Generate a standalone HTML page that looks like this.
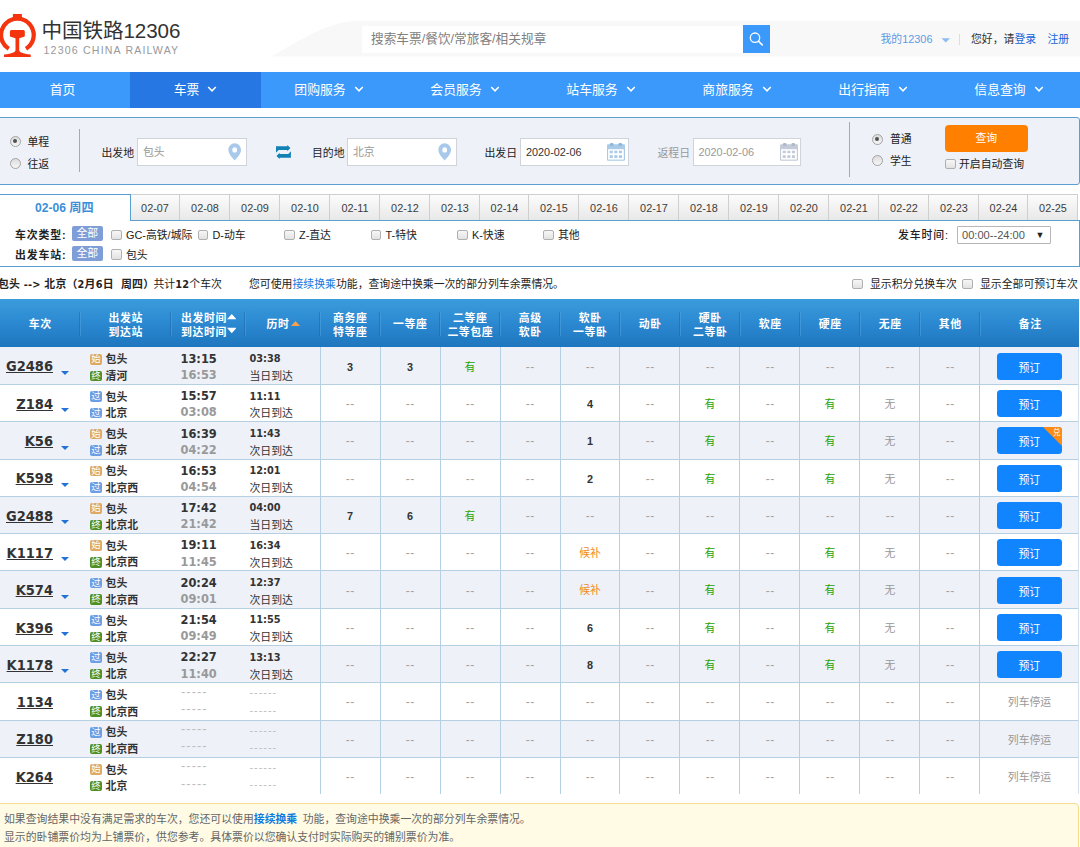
<!DOCTYPE html>
<html lang="zh-CN">
<head>
<meta charset="utf-8">
<title>中国铁路12306</title>
<style>
*{box-sizing:border-box;margin:0;padding:0}
html,body{width:1080px;height:847px;overflow:hidden;background:#fff}
body{font-family:"Liberation Sans","Noto Sans CJK SC",sans-serif;font-size:10.87px;color:#222;position:relative;line-height:1.2}
a{text-decoration:none;color:#1565d8}
.abs{position:absolute}
.t{position:absolute;white-space:nowrap;line-height:14px;height:14px}
.b{font-weight:bold;letter-spacing:0.9px}
/* header */
#hd{position:absolute;left:0;top:0;width:1080px;height:72px;background:#fff;overflow:hidden}
#hdbg{position:absolute;left:0;top:0}
#title{position:absolute;left:41.5px;top:18.6px;font-size:20.6px;line-height:24px;color:#333;white-space:nowrap;letter-spacing:-0.1px}
#sub{position:absolute;left:43.5px;top:43.5px;font-size:10.6px;line-height:13px;color:#999;white-space:nowrap;letter-spacing:1.18px}
#sbox{position:absolute;left:362px;top:26px;width:381px;height:26.5px;background:#fff;border:0;font-size:12.68px;color:#808080;line-height:26.5px;padding-left:9px;white-space:nowrap}
#sbtn{position:absolute;left:743px;top:25px;width:27px;height:27.5px;background:#3b99fc}
/* nav */
#nav{position:absolute;left:0;top:72px;width:1080px;height:36px;background:#3b99fc}
#nav .it{position:absolute;top:0;height:36px;line-height:36px;color:#fff;font-size:12.85px;text-align:center;white-space:nowrap}
#nav .it.on{background:#2676e3}
#nav svg{display:inline-block;vertical-align:middle;margin-left:8px;position:relative;top:-1px}
/* panel */
#panel{position:absolute;left:-4px;top:117px;width:1083.5px;height:67.5px;background:#eef1f8;border:1px solid #5a9fd0;border-radius:3px}
.inp{position:absolute;background:#fff;border:1px solid #cfd3da;height:27.5px;line-height:27.5px;font-size:10.87px;color:#999;padding-left:5px;white-space:nowrap}
.radio{position:absolute;width:11px;height:11px;border-radius:50%;border:1px solid #a3a3a3;background:linear-gradient(#dcdcdc,#f6f6f6)}
.radio.on:after{content:"";position:absolute;left:2.2px;top:2.2px;width:4.6px;height:4.6px;border-radius:50%;background:#505050}
.cb{position:absolute;width:10.5px;height:10.5px;border:1px solid #b0b0b0;border-radius:2px;background:linear-gradient(#f7f7f7,#e2e2e2)}

#tabs{position:absolute;left:0;top:193.5px;width:1080px;height:27px}
#tabs .d{position:absolute;top:0;height:26.5px;border:1px solid #cfcfcf;border-left:0;border-bottom:0;background:linear-gradient(#fcfcfc,#e8e8e8);text-align:center;line-height:27px;font-size:10.87px;color:#3c3c3c;padding-left:1px}
#tabs .cur{position:absolute;left:-2px;top:0;width:132.5px;height:27px;background:#fff;border:1px solid #5a9fd0;border-bottom:0;color:#3b8fd9;font-weight:bold;font-size:12.1px;line-height:26px;text-align:center;z-index:2;padding-left:0px}
#filter{position:absolute;left:-4px;top:220px;width:1083.5px;height:46.5px;border:1px solid #5a9fd0;background:#fff}
.all{position:absolute;width:30.5px;height:15px;background:#7f9dd6;color:#fff;border-radius:2px;text-align:center;line-height:15px;font-size:10.87px}
#sel{position:absolute;left:957px;top:226.3px;width:93.5px;height:18px;border:1px solid #b6b6b6;background:#fff;font-size:11.100px;line-height:16.5px;padding-left:4px;color:#555;border-radius:1px}
#th{position:absolute;left:0;top:299px;width:1078.7px;height:47.7px;background:linear-gradient(#3b9cdc,#2b89d1 50%,#1e76be);}
#th .h{position:absolute;color:#fff;font-weight:bold;font-size:10.87px;line-height:13.7px;text-align:center;white-space:nowrap;letter-spacing:0.6px;padding-left:0.6px}
#th .dv{position:absolute;top:12.5px;width:2px;height:24px;border-left:1px solid #2069a8;border-right:1px solid #4ea3dd;opacity:.55}
.row{position:absolute;left:0;width:1078.7px;height:37.3px;box-shadow:inset 0 1px 0 #b5cfe3;overflow:hidden}
.row.odd{background:#eef1f8}
.row .vl{position:absolute;top:-1px;width:1px;height:40px;background:#b5cfe3}
.row .c{position:absolute;top:13px;width:60px;height:14px;line-height:14px;text-align:center;font-size:10.87px;color:#999}
.row .c.d{font-size:12px;letter-spacing:0.7px;padding-left:0.7px;color:#a3a3a3;top:13.2px}
.row .c.n{color:#333;font-weight:bold}
.row .c.y{color:#26a306}
.row .c.hb{color:#f08a1c}
.num{position:absolute;right:1027px;top:10.87px;text-decoration-thickness:1.1px;text-underline-offset:1.1px;font-family:"DejaVu Sans Condensed","DejaVu Sans","Liberation Sans",sans-serif;font-weight:bold;font-size:14.5px;line-height:18px;color:#333;text-decoration:underline;white-space:nowrap}
.tri{position:absolute;left:60.6px;top:24.4px;width:0;height:0;border-left:4.7px solid transparent;border-right:4.700px solid transparent;border-top:4.400px solid #2272d8}
.ic{position:absolute;left:90.2px;width:11.4px;height:10.6px;border-radius:2px;color:#fff;font-size:9.4px;line-height:10.6px;text-align:center;overflow:hidden}
.ic.s{background:#dcaa64}.ic.z{background:#4f8f24}.ic.g{background:#6c9ee4}
.st{position:absolute;left:105.6px;font-weight:bold;font-size:10.87px;line-height:14px;color:#333;white-space:nowrap}
.tm{position:absolute;left:180.5px;font-family:"DejaVu Sans Condensed","DejaVu Sans","Liberation Sans",sans-serif;font-weight:bold;font-size:12.68px;line-height:16px;color:#333;white-space:nowrap}
.tm.a{color:#999}
.du{position:absolute;left:249.5px;font-family:"DejaVu Sans Condensed","DejaVu Sans","Liberation Sans",sans-serif;font-weight:bold;font-size:10.87px;line-height:14px;color:#333;white-space:nowrap}
.dd{position:absolute;left:249.5px;font-size:10.87px;line-height:14px;color:#333;white-space:nowrap}
.dash{position:absolute;color:#bdbdbd;font-size:12.68px;line-height:14px;letter-spacing:1.1px;white-space:nowrap}
.dash.d2{font-size:10.87px;letter-spacing:1px}
.bk{position:absolute;left:996.5px;top:6.200px;width:65.500px;height:27px;background:#1184ff;border-radius:3.500px;color:#fff;font-size:10.87px;line-height:31.600px;text-align:center;overflow:hidden}
.stop{position:absolute;left:980px;width:99px;top:13.200px;text-align:center;font-size:10.87px;line-height:14px;color:#999}
.tb{font-family:"DejaVu Sans Condensed","Liberation Sans","Noto Sans CJK SC",sans-serif;letter-spacing:0.22px}
.lk{color:#0f7ae0;font-weight:bold}
#note{position:absolute;left:-4px;top:803px;width:1082.500px;height:60px;background:#fffbe5;border:1px solid #f3dd8e;border-radius:4px}
</style>
</head>
<body>
<div id="hd">
<svg id="hdbg" width="1080" height="72" viewBox="0 0 1080 72"><path d="M271 56.5 C285 50 320 24 352 21.3 L1080 21.3 L1080 56.5 Z" fill="#f8f8f8"/></svg>
<svg class="abs" style="left:-2px;top:12px" width="42" height="48" viewBox="-2 12 42 48">
<g fill="#f4330f">
<path d="M12.9 13.9 H21.900 V17.100 A18.400 18.400 0 0 1 27.150 50.600 L24.930 47.040 A14.200 14.200 0 1 0 9.870 47.040 L7.650 50.600 A18.400 18.400 0 0 1 12.900 17.100 Z"/>
<path d="M11.4 30.1 h11.9 a1.5 1.5 0 0 1 1.5 1.5 v4 a1.5 1.5 0 0 1 -1.5 1.5 l-4.1 1.2 v12 c0.5 2 3 3.3 11.5 4.3 v2.3 h-26.7 v-2.3 c8.500 -1 11 -2.300 11.500 -4.300 v-12 l-4.100 -1.200 a1.500 1.500 0 0 1 -1.500 -1.500 v-4 a1.500 1.500 0 0 1 1.500 -1.500 z"/>
</g></svg>
<div id="title">中国铁路12306</div>
<div id="sub">12306 CHINA RAILWAY</div>
<div id="sbox">搜索车票/餐饮/常旅客/相关规章</div>
<div id="sbtn"><svg width="27" height="27.5" viewBox="0 0 27 27.5"><circle cx="12" cy="12.700" r="4.700" fill="none" stroke="#fff" stroke-width="1.300"/><path d="M15.500 16.200 L19.200 19.900" stroke="#fff" stroke-width="1.600" stroke-linecap="round"/></svg></div>
<div class="t" style="left:880.5px;top:32px;color:#5b9be6">我的12306</div>
<svg class="abs" style="left:941px;top:37.5px" width="10" height="5" viewBox="0 0 10 5"><path d="M0.5 0.3 L9 0.3 L4.75 4.5 Z" fill="#8cbcf0"/></svg>
<div class="abs" style="left:959px;top:34px;width:1px;height:11px;background:#cfe0f3"></div>
<div class="t" style="left:971px;top:32px;color:#333">您好，请<a href="#">登录</a></div>
<div class="t" style="left:1047.5px;top:32px"><a href="#">注册</a></div>
</div>
<div id="nav">
<div class="it" style="left:-5px;width:135px">首页</div>
<div class="it on" style="left:130px;width:131px">车票<svg width="10" height="6.5" viewBox="0 0 9 6"><path d="M1 1 L4.5 4.5 L8 1" fill="none" stroke="#fff" stroke-width="1.4"/></svg></div>
<div class="it" style="left:261px;width:136px">团购服务<svg width="10" height="6.5" viewBox="0 0 9 6"><path d="M1 1 L4.5 4.5 L8 1" fill="none" stroke="#fff" stroke-width="1.4"/></svg></div>
<div class="it" style="left:397px;width:136px">会员服务<svg width="10" height="6.5" viewBox="0 0 9 6"><path d="M1 1 L4.5 4.5 L8 1" fill="none" stroke="#fff" stroke-width="1.4"/></svg></div>
<div class="it" style="left:533px;width:136px">站车服务<svg width="10" height="6.5" viewBox="0 0 9 6"><path d="M1 1 L4.5 4.5 L8 1" fill="none" stroke="#fff" stroke-width="1.4"/></svg></div>
<div class="it" style="left:669px;width:136px">商旅服务<svg width="10" height="6.5" viewBox="0 0 9 6"><path d="M1 1 L4.5 4.5 L8 1" fill="none" stroke="#fff" stroke-width="1.4"/></svg></div>
<div class="it" style="left:805px;width:136px">出行指南<svg width="10" height="6.5" viewBox="0 0 9 6"><path d="M1 1 L4.5 4.5 L8 1" fill="none" stroke="#fff" stroke-width="1.4"/></svg></div>
<div class="it" style="left:941px;width:136px">信息查询<svg width="10" height="6.5" viewBox="0 0 9 6"><path d="M1 1 L4.5 4.5 L8 1" fill="none" stroke="#fff" stroke-width="1.4"/></svg></div>
</div>
<div id="panel"></div>
<div class="radio on" style="left:9.5px;top:135.5px"></div><div class="t" style="left:27.5px;top:134.7px">单程</div>
<div class="radio" style="left:9.5px;top:157.5px"></div><div class="t" style="left:27.5px;top:156.7px">往返</div>
<div class="abs" style="left:79px;top:129px;width:1px;height:43px;background:#7db5de"></div>
<div class="t" style="left:101.5px;top:146.2px">出发地</div><div class="inp" style="left:137px;top:138px;width:109.5px">包头<svg class="abs" style="right:4px;top:3.9px" width="13.4" height="17.8" viewBox="0 0 14 17" preserveAspectRatio="none"><path d="M7 0.3 C3.300 0.300 0.400 3.100 0.400 6.700 C0.400 10.800 5 14.500 7 16.700 C9 14.500 13.600 10.800 13.600 6.700 C13.600 3.100 10.700 0.300 7 0.300 Z M7 4.100 A2.500 2.500 0 1 1 7 9.100 A2.500 2.500 0 1 1 7 4.100 Z" fill="#a9c9ea" fill-rule="evenodd"/></svg></div>
<svg class="abs" style="left:276px;top:145px" width="16" height="15" viewBox="0 0 16 15"><g fill="#1281b3"><path d="M0 1.300 L11.300 1.300 L11.300 0 L14.400 3.100 L11.300 6.200 L11.300 4.900 L2.600 4.900 L0 7.800 Z"/><path d="M14.900 12.700 L3.600 12.700 L3.600 14 L0.500 10.900 L3.600 7.800 L3.600 9.100 L12.300 9.100 L14.900 6.200 Z"/></g></svg>
<div class="t" style="left:312px;top:146.2px">目的地</div><div class="inp" style="left:347px;top:138px;width:109.5px">北京<svg class="abs" style="right:4px;top:3.9px" width="13.4" height="17.8" viewBox="0 0 14 17" preserveAspectRatio="none"><path d="M7 0.3 C3.300 0.300 0.400 3.100 0.400 6.700 C0.400 10.800 5 14.500 7 16.700 C9 14.500 13.600 10.800 13.600 6.700 C13.600 3.100 10.700 0.300 7 0.300 Z M7 4.100 A2.500 2.500 0 1 1 7 9.100 A2.500 2.500 0 1 1 7 4.100 Z" fill="#a9c9ea" fill-rule="evenodd"/></svg></div>
<div class="t" style="left:484.5px;top:146.2px">出发日</div><div class="inp" style="left:520px;top:138px;width:108.5px;color:#333">2020-02-06<svg class="abs" style="right:2.5px;top:3.900px" width="18" height="17.800" viewBox="0 0 18 17.800"><rect x="0" y="1.200" width="18" height="16.600" rx="1.200" fill="#a9cbe8"/><rect x="2.800" y="0" width="3.800" height="3" rx="1.500" fill="#8db7dc"/><rect x="11.400" y="0" width="3.800" height="3" rx="1.500" fill="#8db7dc"/><rect x="1.100" y="6.200" width="15.700" height="10.400" fill="#fff"/><g fill="#a9cbe8"><rect x="2.7" y="7.7" width="3.100" height="2.5"/><rect x="7.3" y="7.7" width="3.100" height="2.5"/><rect x="11.9" y="7.7" width="3.100" height="2.5"/><rect x="2.7" y="12.2" width="3.100" height="2.8"/><rect x="7.3" y="12.2" width="3.100" height="2.8"/><rect x="11.9" y="12.2" width="3.100" height="2.8"/></g></svg></div>
<div class="t" style="left:657.5px;top:146.2px;color:#999">返程日</div><div class="inp" style="left:692.5px;top:138px;width:108.5px;color:#999">2020-02-06<svg class="abs" style="right:2.5px;top:3.900px" width="18" height="17.800" viewBox="0 0 18 17.800"><rect x="0" y="1.200" width="18" height="16.600" rx="1.200" fill="#c3cbd8"/><rect x="2.800" y="0" width="3.800" height="3" rx="1.500" fill="#b0b9c8"/><rect x="11.400" y="0" width="3.800" height="3" rx="1.500" fill="#b0b9c8"/><rect x="1.100" y="6.200" width="15.700" height="10.400" fill="#fff"/><g fill="#c3cbd8"><rect x="2.7" y="7.7" width="3.100" height="2.5"/><rect x="7.3" y="7.7" width="3.100" height="2.5"/><rect x="11.9" y="7.7" width="3.100" height="2.5"/><rect x="2.7" y="12.2" width="3.100" height="2.8"/><rect x="7.3" y="12.2" width="3.100" height="2.8"/><rect x="11.9" y="12.2" width="3.100" height="2.8"/></g></svg></div>
<div class="abs" style="left:849px;top:122px;width:1px;height:55px;background:#7db5de"></div>
<div class="radio on" style="left:871.5px;top:133.5px"></div><div class="t" style="left:890px;top:132px">普通</div>
<div class="radio" style="left:871.5px;top:154.500px"></div><div class="t" style="left:890px;top:153.500px">学生</div>
<div class="abs" style="left:944.5px;top:124.500px;width:83.500px;height:27.500px;background:#ff8000;border-radius:4px;color:#fff;font-size:10.87px;line-height:27.500px;text-align:center">查询</div>
<div class="cb" style="left:945px;top:158.500px"></div><div class="t" style="left:959px;top:157px">开启自动查询</div>
<div id="tabs">
<div class="cur">02-06 周四</div>
<div class="d" style="left:130px;width:50px">02-07</div>
<div class="d" style="left:180px;width:50px">02-08</div>
<div class="d" style="left:230px;width:50px">02-09</div>
<div class="d" style="left:280px;width:50px">02-10</div>
<div class="d" style="left:330px;width:50px">02-11</div>
<div class="d" style="left:380px;width:50px">02-12</div>
<div class="d" style="left:430px;width:50px">02-13</div>
<div class="d" style="left:480px;width:49px">02-14</div>
<div class="d" style="left:529px;width:50px">02-15</div>
<div class="d" style="left:579px;width:50px">02-16</div>
<div class="d" style="left:629px;width:50px">02-17</div>
<div class="d" style="left:679px;width:50px">02-18</div>
<div class="d" style="left:729px;width:50px">02-19</div>
<div class="d" style="left:779px;width:50px">02-20</div>
<div class="d" style="left:829px;width:50px">02-21</div>
<div class="d" style="left:879px;width:50px">02-22</div>
<div class="d" style="left:929px;width:50px">02-23</div>
<div class="d" style="left:979px;width:49px">02-24</div>
<div class="d" style="left:1028px;width:50px">02-25</div>
</div>
<div id="filter"></div>
<div class="t b" style="left:15px;top:228px">车次类型:</div><div class="all" style="left:72px;top:225.8px">全部</div>
<div class="cb" style="left:111px;top:229.5px"></div><div class="t" style="left:126px;top:228px">GC-高铁/城际</div>
<div class="cb" style="left:197.5px;top:229.5px"></div><div class="t" style="left:212.5px;top:228px">D-动车</div>
<div class="cb" style="left:284px;top:229.5px"></div><div class="t" style="left:299px;top:228px">Z-直达</div>
<div class="cb" style="left:370.5px;top:229.5px"></div><div class="t" style="left:385.5px;top:228px">T-特快</div>
<div class="cb" style="left:457px;top:229.5px"></div><div class="t" style="left:472px;top:228px">K-快速</div>
<div class="cb" style="left:543px;top:229.5px"></div><div class="t" style="left:558px;top:228px">其他</div>
<div class="t b" style="left:15px;top:247.5px">出发车站:</div><div class="all" style="left:72px;top:246px">全部</div>
<div class="cb" style="left:111px;top:249px"></div><div class="t" style="left:126px;top:247.500px">包头</div>
<div class="t" style="left:898px;top:228px;font-weight:500;letter-spacing:0.9px">发车时间:</div><div id="sel">00:00--24:00<span class="abs" style="right:5px;top:-0.5px;font-size:9px;color:#222">▼</span></div>
<div class="t" style="left:-2px;top:277px"><b class="tb">包头 --&gt; 北京（2月6日&nbsp; 周四）</b></div><div class="t" style="left:153.5px;top:277px">共计<b class="tb">12</b>个车次</div>
<div class="t" style="left:249px;top:277px">您可使用<a href="#" style="color:#0f7ae0">接续换乘</a>功能，查询途中换乘一次的部分列车余票情况。</div>
<div class="cb" style="left:852px;top:278.500px"></div><div class="t" style="left:870px;top:277px">显示积分兑换车次</div>
<div class="cb" style="left:962px;top:278.500px"></div><div class="t" style="left:980px;top:277px">显示全部可预订车次</div>
<div id="th">
<div class="dv" style="left:79px"></div><div class="dv" style="left:170px"></div><div class="dv" style="left:244px"></div><div class="dv" style="left:319px"></div><div class="dv" style="left:379px"></div><div class="dv" style="left:439px"></div><div class="dv" style="left:499px"></div><div class="dv" style="left:559px"></div><div class="dv" style="left:619px"></div><div class="dv" style="left:679px"></div><div class="dv" style="left:739px"></div><div class="dv" style="left:799px"></div><div class="dv" style="left:859px"></div><div class="dv" style="left:919px"></div><div class="dv" style="left:979px"></div>
<div class="h" style="left:0px;width:80px;top:19.35px">车次</div>
<div class="h" style="left:80px;width:91px;top:12.90px">出发站<br>到达站</div>
<div class="h" style="left:180.500px;top:12.900px;text-align:left">出发时间<br>到达时间</div>
<svg class="abs" style="left:226.500px;top:14.700px" width="9.5" height="21" viewBox="0 0 9.5 21"><path d="M0 5.300 L4.750 0 L9.500 5.300 Z M0 13.800 L9.500 13.800 L4.750 19.300 Z" fill="#fff"/></svg>
<div class="h" style="left:266px;top:19.350px;text-align:left">历时</div>
<svg class="abs" style="left:291px;top:22px" width="9" height="5" viewBox="0 0 9 5"><path d="M0 5 L4.500 0 L9 5 Z" fill="#f9a04a"/></svg>
<div class="h" style="left:320px;width:60px;top:12.90px">商务座<br>特等座</div>
<div class="h" style="left:380px;width:60px;top:19.35px">一等座</div>
<div class="h" style="left:440px;width:60px;top:12.90px">二等座<br>二等包座</div>
<div class="h" style="left:500px;width:60px;top:12.90px">高级<br>软卧</div>
<div class="h" style="left:560px;width:60px;top:12.90px">软卧<br>一等卧</div>
<div class="h" style="left:620px;width:60px;top:19.35px">动卧</div>
<div class="h" style="left:680px;width:60px;top:12.90px">硬卧<br>二等卧</div>
<div class="h" style="left:740px;width:60px;top:19.35px">软座</div>
<div class="h" style="left:800px;width:60px;top:19.35px">硬座</div>
<div class="h" style="left:860px;width:60px;top:19.35px">无座</div>
<div class="h" style="left:920px;width:60px;top:19.35px">其他</div>
<div class="h" style="left:980px;width:100px;top:19.35px">备注</div>
</div>
<div class="row odd" style="top:347px;height:37px;box-shadow:none"><div class="abs" style="left:0;top:-0.40px;width:1080px;height:38px">
<div class="vl" style="left:320px"></div><div class="vl" style="left:380px"></div><div class="vl" style="left:440px"></div><div class="vl" style="left:500px"></div><div class="vl" style="left:560px"></div><div class="vl" style="left:619px"></div><div class="vl" style="left:679px"></div><div class="vl" style="left:739px"></div><div class="vl" style="left:799px"></div><div class="vl" style="left:859px"></div><div class="vl" style="left:919px"></div><div class="vl" style="left:979px"></div><div class="vl" style="left:1077.7px;background:#d3e1ee"></div>
<a class="num" href="#">G2486</a><div class="tri"></div><div class="ic s" style="top:7.400px">始</div><div class="st" style="top:5.800px">包头</div><div class="ic z" style="top:23.900px">终</div><div class="st" style="top:22.300px">清河</div>
<div class="tm" style="top:4.400px">13:15</div><div class="tm a" style="top:20.500px">16:53</div><div class="du" style="top:5.600px">03:38</div><div class="dd" style="top:22.500px">当日到达</div>
<div class="c n" style="left:320px">3</div><div class="c n" style="left:380px">3</div><div class="c y" style="left:440px">有</div><div class="c d" style="left:500px">--</div><div class="c d" style="left:560px">--</div><div class="c d" style="left:620px">--</div><div class="c d" style="left:680px">--</div><div class="c d" style="left:740px">--</div><div class="c d" style="left:800px">--</div><div class="c d" style="left:860px">--</div><div class="c d" style="left:920px">--</div>
<a class="bk" href="#">预订</a>
</div></div>
<div class="row" style="top:384px;height:37px"><div class="abs" style="left:0;top:-0.10px;width:1080px;height:38px">
<div class="vl" style="left:320px"></div><div class="vl" style="left:380px"></div><div class="vl" style="left:440px"></div><div class="vl" style="left:500px"></div><div class="vl" style="left:560px"></div><div class="vl" style="left:619px"></div><div class="vl" style="left:679px"></div><div class="vl" style="left:739px"></div><div class="vl" style="left:799px"></div><div class="vl" style="left:859px"></div><div class="vl" style="left:919px"></div><div class="vl" style="left:979px"></div><div class="vl" style="left:1077.7px;background:#d3e1ee"></div>
<a class="num" href="#">Z184</a><div class="tri"></div><div class="ic g" style="top:7.400px">过</div><div class="st" style="top:5.800px">包头</div><div class="ic g" style="top:23.900px">过</div><div class="st" style="top:22.300px">北京</div>
<div class="tm" style="top:4.400px">15:57</div><div class="tm a" style="top:20.500px">03:08</div><div class="du" style="top:5.600px">11:11</div><div class="dd" style="top:22.500px">次日到达</div>
<div class="c d" style="left:320px">--</div><div class="c d" style="left:380px">--</div><div class="c d" style="left:440px">--</div><div class="c d" style="left:500px">--</div><div class="c n" style="left:560px">4</div><div class="c d" style="left:620px">--</div><div class="c y" style="left:680px">有</div><div class="c d" style="left:740px">--</div><div class="c y" style="left:800px">有</div><div class="c" style="left:860px">无</div><div class="c d" style="left:920px">--</div>
<a class="bk" href="#">预订</a>
</div></div>
<div class="row odd" style="top:421px;height:38px"><div class="abs" style="left:0;top:0.20px;width:1080px;height:38px">
<div class="vl" style="left:320px"></div><div class="vl" style="left:380px"></div><div class="vl" style="left:440px"></div><div class="vl" style="left:500px"></div><div class="vl" style="left:560px"></div><div class="vl" style="left:619px"></div><div class="vl" style="left:679px"></div><div class="vl" style="left:739px"></div><div class="vl" style="left:799px"></div><div class="vl" style="left:859px"></div><div class="vl" style="left:919px"></div><div class="vl" style="left:979px"></div><div class="vl" style="left:1077.7px;background:#d3e1ee"></div>
<a class="num" href="#">K56</a><div class="tri"></div><div class="ic s" style="top:7.400px">始</div><div class="st" style="top:5.800px">包头</div><div class="ic g" style="top:23.900px">过</div><div class="st" style="top:22.300px">北京</div>
<div class="tm" style="top:4.400px">16:39</div><div class="tm a" style="top:20.500px">04:22</div><div class="du" style="top:5.600px">11:43</div><div class="dd" style="top:22.500px">次日到达</div>
<div class="c d" style="left:320px">--</div><div class="c d" style="left:380px">--</div><div class="c d" style="left:440px">--</div><div class="c d" style="left:500px">--</div><div class="c n" style="left:560px">1</div><div class="c d" style="left:620px">--</div><div class="c y" style="left:680px">有</div><div class="c d" style="left:740px">--</div><div class="c y" style="left:800px">有</div><div class="c" style="left:860px">无</div><div class="c d" style="left:920px">--</div>
<a class="bk" href="#">预订<span class="abs" style="right:0;top:0;width:0;height:0;border-left:19.500px solid transparent;border-top:19.500px solid #ff8a14"></span><span class="abs" style="right:1.500px;top:0.500px;font-size:7.500px;line-height:9px;color:#fff">兑</span></a>
</div></div>
<div class="row" style="top:459px;height:37px"><div class="abs" style="left:0;top:-0.50px;width:1080px;height:38px">
<div class="vl" style="left:320px"></div><div class="vl" style="left:380px"></div><div class="vl" style="left:440px"></div><div class="vl" style="left:500px"></div><div class="vl" style="left:560px"></div><div class="vl" style="left:619px"></div><div class="vl" style="left:679px"></div><div class="vl" style="left:739px"></div><div class="vl" style="left:799px"></div><div class="vl" style="left:859px"></div><div class="vl" style="left:919px"></div><div class="vl" style="left:979px"></div><div class="vl" style="left:1077.7px;background:#d3e1ee"></div>
<a class="num" href="#">K598</a><div class="tri"></div><div class="ic s" style="top:7.400px">始</div><div class="st" style="top:5.800px">包头</div><div class="ic g" style="top:23.900px">过</div><div class="st" style="top:22.300px">北京西</div>
<div class="tm" style="top:4.400px">16:53</div><div class="tm a" style="top:20.500px">04:54</div><div class="du" style="top:5.600px">12:01</div><div class="dd" style="top:22.500px">次日到达</div>
<div class="c d" style="left:320px">--</div><div class="c d" style="left:380px">--</div><div class="c d" style="left:440px">--</div><div class="c d" style="left:500px">--</div><div class="c n" style="left:560px">2</div><div class="c d" style="left:620px">--</div><div class="c y" style="left:680px">有</div><div class="c d" style="left:740px">--</div><div class="c y" style="left:800px">有</div><div class="c" style="left:860px">无</div><div class="c d" style="left:920px">--</div>
<a class="bk" href="#">预订</a>
</div></div>
<div class="row odd" style="top:496px;height:37px"><div class="abs" style="left:0;top:-0.20px;width:1080px;height:38px">
<div class="vl" style="left:320px"></div><div class="vl" style="left:380px"></div><div class="vl" style="left:440px"></div><div class="vl" style="left:500px"></div><div class="vl" style="left:560px"></div><div class="vl" style="left:619px"></div><div class="vl" style="left:679px"></div><div class="vl" style="left:739px"></div><div class="vl" style="left:799px"></div><div class="vl" style="left:859px"></div><div class="vl" style="left:919px"></div><div class="vl" style="left:979px"></div><div class="vl" style="left:1077.7px;background:#d3e1ee"></div>
<a class="num" href="#">G2488</a><div class="tri"></div><div class="ic s" style="top:7.400px">始</div><div class="st" style="top:5.800px">包头</div><div class="ic z" style="top:23.900px">终</div><div class="st" style="top:22.300px">北京北</div>
<div class="tm" style="top:4.400px">17:42</div><div class="tm a" style="top:20.500px">21:42</div><div class="du" style="top:5.600px">04:00</div><div class="dd" style="top:22.500px">当日到达</div>
<div class="c n" style="left:320px">7</div><div class="c n" style="left:380px">6</div><div class="c y" style="left:440px">有</div><div class="c d" style="left:500px">--</div><div class="c d" style="left:560px">--</div><div class="c d" style="left:620px">--</div><div class="c d" style="left:680px">--</div><div class="c d" style="left:740px">--</div><div class="c d" style="left:800px">--</div><div class="c d" style="left:860px">--</div><div class="c d" style="left:920px">--</div>
<a class="bk" href="#">预订</a>
</div></div>
<div class="row" style="top:533px;height:37px"><div class="abs" style="left:0;top:0.10px;width:1080px;height:38px">
<div class="vl" style="left:320px"></div><div class="vl" style="left:380px"></div><div class="vl" style="left:440px"></div><div class="vl" style="left:500px"></div><div class="vl" style="left:560px"></div><div class="vl" style="left:619px"></div><div class="vl" style="left:679px"></div><div class="vl" style="left:739px"></div><div class="vl" style="left:799px"></div><div class="vl" style="left:859px"></div><div class="vl" style="left:919px"></div><div class="vl" style="left:979px"></div><div class="vl" style="left:1077.7px;background:#d3e1ee"></div>
<a class="num" href="#">K1117</a><div class="tri"></div><div class="ic s" style="top:7.400px">始</div><div class="st" style="top:5.800px">包头</div><div class="ic z" style="top:23.900px">终</div><div class="st" style="top:22.300px">北京西</div>
<div class="tm" style="top:4.400px">19:11</div><div class="tm a" style="top:20.500px">11:45</div><div class="du" style="top:5.600px">16:34</div><div class="dd" style="top:22.500px">次日到达</div>
<div class="c d" style="left:320px">--</div><div class="c d" style="left:380px">--</div><div class="c d" style="left:440px">--</div><div class="c d" style="left:500px">--</div><div class="c hb" style="left:560px">候补</div><div class="c d" style="left:620px">--</div><div class="c y" style="left:680px">有</div><div class="c d" style="left:740px">--</div><div class="c y" style="left:800px">有</div><div class="c" style="left:860px">无</div><div class="c d" style="left:920px">--</div>
<a class="bk" href="#">预订</a>
</div></div>
<div class="row odd" style="top:570px;height:38px"><div class="abs" style="left:0;top:0.40px;width:1080px;height:38px">
<div class="vl" style="left:320px"></div><div class="vl" style="left:380px"></div><div class="vl" style="left:440px"></div><div class="vl" style="left:500px"></div><div class="vl" style="left:560px"></div><div class="vl" style="left:619px"></div><div class="vl" style="left:679px"></div><div class="vl" style="left:739px"></div><div class="vl" style="left:799px"></div><div class="vl" style="left:859px"></div><div class="vl" style="left:919px"></div><div class="vl" style="left:979px"></div><div class="vl" style="left:1077.7px;background:#d3e1ee"></div>
<a class="num" href="#">K574</a><div class="tri"></div><div class="ic g" style="top:7.400px">过</div><div class="st" style="top:5.800px">包头</div><div class="ic z" style="top:23.900px">终</div><div class="st" style="top:22.300px">北京西</div>
<div class="tm" style="top:4.400px">20:24</div><div class="tm a" style="top:20.500px">09:01</div><div class="du" style="top:5.600px">12:37</div><div class="dd" style="top:22.500px">次日到达</div>
<div class="c d" style="left:320px">--</div><div class="c d" style="left:380px">--</div><div class="c d" style="left:440px">--</div><div class="c d" style="left:500px">--</div><div class="c hb" style="left:560px">候补</div><div class="c d" style="left:620px">--</div><div class="c y" style="left:680px">有</div><div class="c d" style="left:740px">--</div><div class="c y" style="left:800px">有</div><div class="c" style="left:860px">无</div><div class="c d" style="left:920px">--</div>
<a class="bk" href="#">预订</a>
</div></div>
<div class="row" style="top:608px;height:37px"><div class="abs" style="left:0;top:-0.30px;width:1080px;height:38px">
<div class="vl" style="left:320px"></div><div class="vl" style="left:380px"></div><div class="vl" style="left:440px"></div><div class="vl" style="left:500px"></div><div class="vl" style="left:560px"></div><div class="vl" style="left:619px"></div><div class="vl" style="left:679px"></div><div class="vl" style="left:739px"></div><div class="vl" style="left:799px"></div><div class="vl" style="left:859px"></div><div class="vl" style="left:919px"></div><div class="vl" style="left:979px"></div><div class="vl" style="left:1077.7px;background:#d3e1ee"></div>
<a class="num" href="#">K396</a><div class="tri"></div><div class="ic g" style="top:7.400px">过</div><div class="st" style="top:5.800px">包头</div><div class="ic z" style="top:23.900px">终</div><div class="st" style="top:22.300px">北京</div>
<div class="tm" style="top:4.400px">21:54</div><div class="tm a" style="top:20.500px">09:49</div><div class="du" style="top:5.600px">11:55</div><div class="dd" style="top:22.500px">次日到达</div>
<div class="c d" style="left:320px">--</div><div class="c d" style="left:380px">--</div><div class="c d" style="left:440px">--</div><div class="c d" style="left:500px">--</div><div class="c n" style="left:560px">6</div><div class="c d" style="left:620px">--</div><div class="c y" style="left:680px">有</div><div class="c d" style="left:740px">--</div><div class="c y" style="left:800px">有</div><div class="c" style="left:860px">无</div><div class="c d" style="left:920px">--</div>
<a class="bk" href="#">预订</a>
</div></div>
<div class="row odd" style="top:645px;height:37px"><div class="abs" style="left:0;top:0.00px;width:1080px;height:38px">
<div class="vl" style="left:320px"></div><div class="vl" style="left:380px"></div><div class="vl" style="left:440px"></div><div class="vl" style="left:500px"></div><div class="vl" style="left:560px"></div><div class="vl" style="left:619px"></div><div class="vl" style="left:679px"></div><div class="vl" style="left:739px"></div><div class="vl" style="left:799px"></div><div class="vl" style="left:859px"></div><div class="vl" style="left:919px"></div><div class="vl" style="left:979px"></div><div class="vl" style="left:1077.7px;background:#d3e1ee"></div>
<a class="num" href="#">K1178</a><div class="tri"></div><div class="ic g" style="top:7.400px">过</div><div class="st" style="top:5.800px">包头</div><div class="ic z" style="top:23.900px">终</div><div class="st" style="top:22.300px">北京</div>
<div class="tm" style="top:4.400px">22:27</div><div class="tm a" style="top:20.500px">11:40</div><div class="du" style="top:5.600px">13:13</div><div class="dd" style="top:22.500px">次日到达</div>
<div class="c d" style="left:320px">--</div><div class="c d" style="left:380px">--</div><div class="c d" style="left:440px">--</div><div class="c d" style="left:500px">--</div><div class="c n" style="left:560px">8</div><div class="c d" style="left:620px">--</div><div class="c y" style="left:680px">有</div><div class="c d" style="left:740px">--</div><div class="c y" style="left:800px">有</div><div class="c" style="left:860px">无</div><div class="c d" style="left:920px">--</div>
<a class="bk" href="#">预订</a>
</div></div>
<div class="row" style="top:682px;height:38px"><div class="abs" style="left:0;top:0.30px;width:1080px;height:38px">
<div class="vl" style="left:320px"></div><div class="vl" style="left:380px"></div><div class="vl" style="left:440px"></div><div class="vl" style="left:500px"></div><div class="vl" style="left:560px"></div><div class="vl" style="left:619px"></div><div class="vl" style="left:679px"></div><div class="vl" style="left:739px"></div><div class="vl" style="left:799px"></div><div class="vl" style="left:859px"></div><div class="vl" style="left:919px"></div><div class="vl" style="left:979px"></div><div class="vl" style="left:1077.7px;background:#d3e1ee"></div>
<a class="num" href="#">1134</a><div class="ic g" style="top:7.400px">过</div><div class="st" style="top:5.800px">包头</div><div class="ic z" style="top:23.900px">终</div><div class="st" style="top:22.300px">北京西</div>
<div class="dash" style="left:181px;top:2.300px">-----</div><div class="dash" style="left:181px;top:19.800px">-----</div><div class="dash d2" style="left:249.500px;top:3px">------</div><div class="dash d2" style="left:249.500px;top:20.500px">------</div>
<div class="c d" style="left:320px">--</div><div class="c d" style="left:380px">--</div><div class="c d" style="left:440px">--</div><div class="c d" style="left:500px">--</div><div class="c d" style="left:560px">--</div><div class="c d" style="left:620px">--</div><div class="c d" style="left:680px">--</div><div class="c d" style="left:740px">--</div><div class="c d" style="left:800px">--</div><div class="c d" style="left:860px">--</div><div class="c d" style="left:920px">--</div>
<div class="stop">列车停运</div>
</div></div>
<div class="row odd" style="top:720px;height:37px"><div class="abs" style="left:0;top:-0.40px;width:1080px;height:38px">
<div class="vl" style="left:320px"></div><div class="vl" style="left:380px"></div><div class="vl" style="left:440px"></div><div class="vl" style="left:500px"></div><div class="vl" style="left:560px"></div><div class="vl" style="left:619px"></div><div class="vl" style="left:679px"></div><div class="vl" style="left:739px"></div><div class="vl" style="left:799px"></div><div class="vl" style="left:859px"></div><div class="vl" style="left:919px"></div><div class="vl" style="left:979px"></div><div class="vl" style="left:1077.7px;background:#d3e1ee"></div>
<a class="num" href="#">Z180</a><div class="ic g" style="top:7.400px">过</div><div class="st" style="top:5.800px">包头</div><div class="ic z" style="top:23.900px">终</div><div class="st" style="top:22.300px">北京西</div>
<div class="dash" style="left:181px;top:2.300px">-----</div><div class="dash" style="left:181px;top:19.800px">-----</div><div class="dash d2" style="left:249.500px;top:3px">------</div><div class="dash d2" style="left:249.500px;top:20.500px">------</div>
<div class="c d" style="left:320px">--</div><div class="c d" style="left:380px">--</div><div class="c d" style="left:440px">--</div><div class="c d" style="left:500px">--</div><div class="c d" style="left:560px">--</div><div class="c d" style="left:620px">--</div><div class="c d" style="left:680px">--</div><div class="c d" style="left:740px">--</div><div class="c d" style="left:800px">--</div><div class="c d" style="left:860px">--</div><div class="c d" style="left:920px">--</div>
<div class="stop">列车停运</div>
</div></div>
<div class="row" style="top:757px;height:37px"><div class="abs" style="left:0;top:-0.10px;width:1080px;height:38px">
<div class="vl" style="left:320px"></div><div class="vl" style="left:380px"></div><div class="vl" style="left:440px"></div><div class="vl" style="left:500px"></div><div class="vl" style="left:560px"></div><div class="vl" style="left:619px"></div><div class="vl" style="left:679px"></div><div class="vl" style="left:739px"></div><div class="vl" style="left:799px"></div><div class="vl" style="left:859px"></div><div class="vl" style="left:919px"></div><div class="vl" style="left:979px"></div><div class="vl" style="left:1077.7px;background:#d3e1ee"></div>
<a class="num" href="#">K264</a><div class="ic s" style="top:7.400px">始</div><div class="st" style="top:5.800px">包头</div><div class="ic z" style="top:23.900px">终</div><div class="st" style="top:22.300px">北京</div>
<div class="dash" style="left:181px;top:2.300px">-----</div><div class="dash" style="left:181px;top:19.800px">-----</div><div class="dash d2" style="left:249.500px;top:3px">------</div><div class="dash d2" style="left:249.500px;top:20.500px">------</div>
<div class="c d" style="left:320px">--</div><div class="c d" style="left:380px">--</div><div class="c d" style="left:440px">--</div><div class="c d" style="left:500px">--</div><div class="c d" style="left:560px">--</div><div class="c d" style="left:620px">--</div><div class="c d" style="left:680px">--</div><div class="c d" style="left:740px">--</div><div class="c d" style="left:800px">--</div><div class="c d" style="left:860px">--</div><div class="c d" style="left:920px">--</div>
<div class="stop">列车停运</div>
</div></div>
<div id="note"></div>
<div class="t" style="left:4px;top:812px;color:#666">如果查询结果中没有满足需求的车次，您还可以使用<a href="#" class="lk">接续换乘</a>&ensp;功能，查询途中换乘一次的部分列车余票情况。</div>
<div class="t" style="left:4px;top:830px;color:#666">显示的卧铺票价均为上铺票价，供您参考。具体票价以您确认支付时实际购买的铺别票价为准。</div>
</body>
</html>
